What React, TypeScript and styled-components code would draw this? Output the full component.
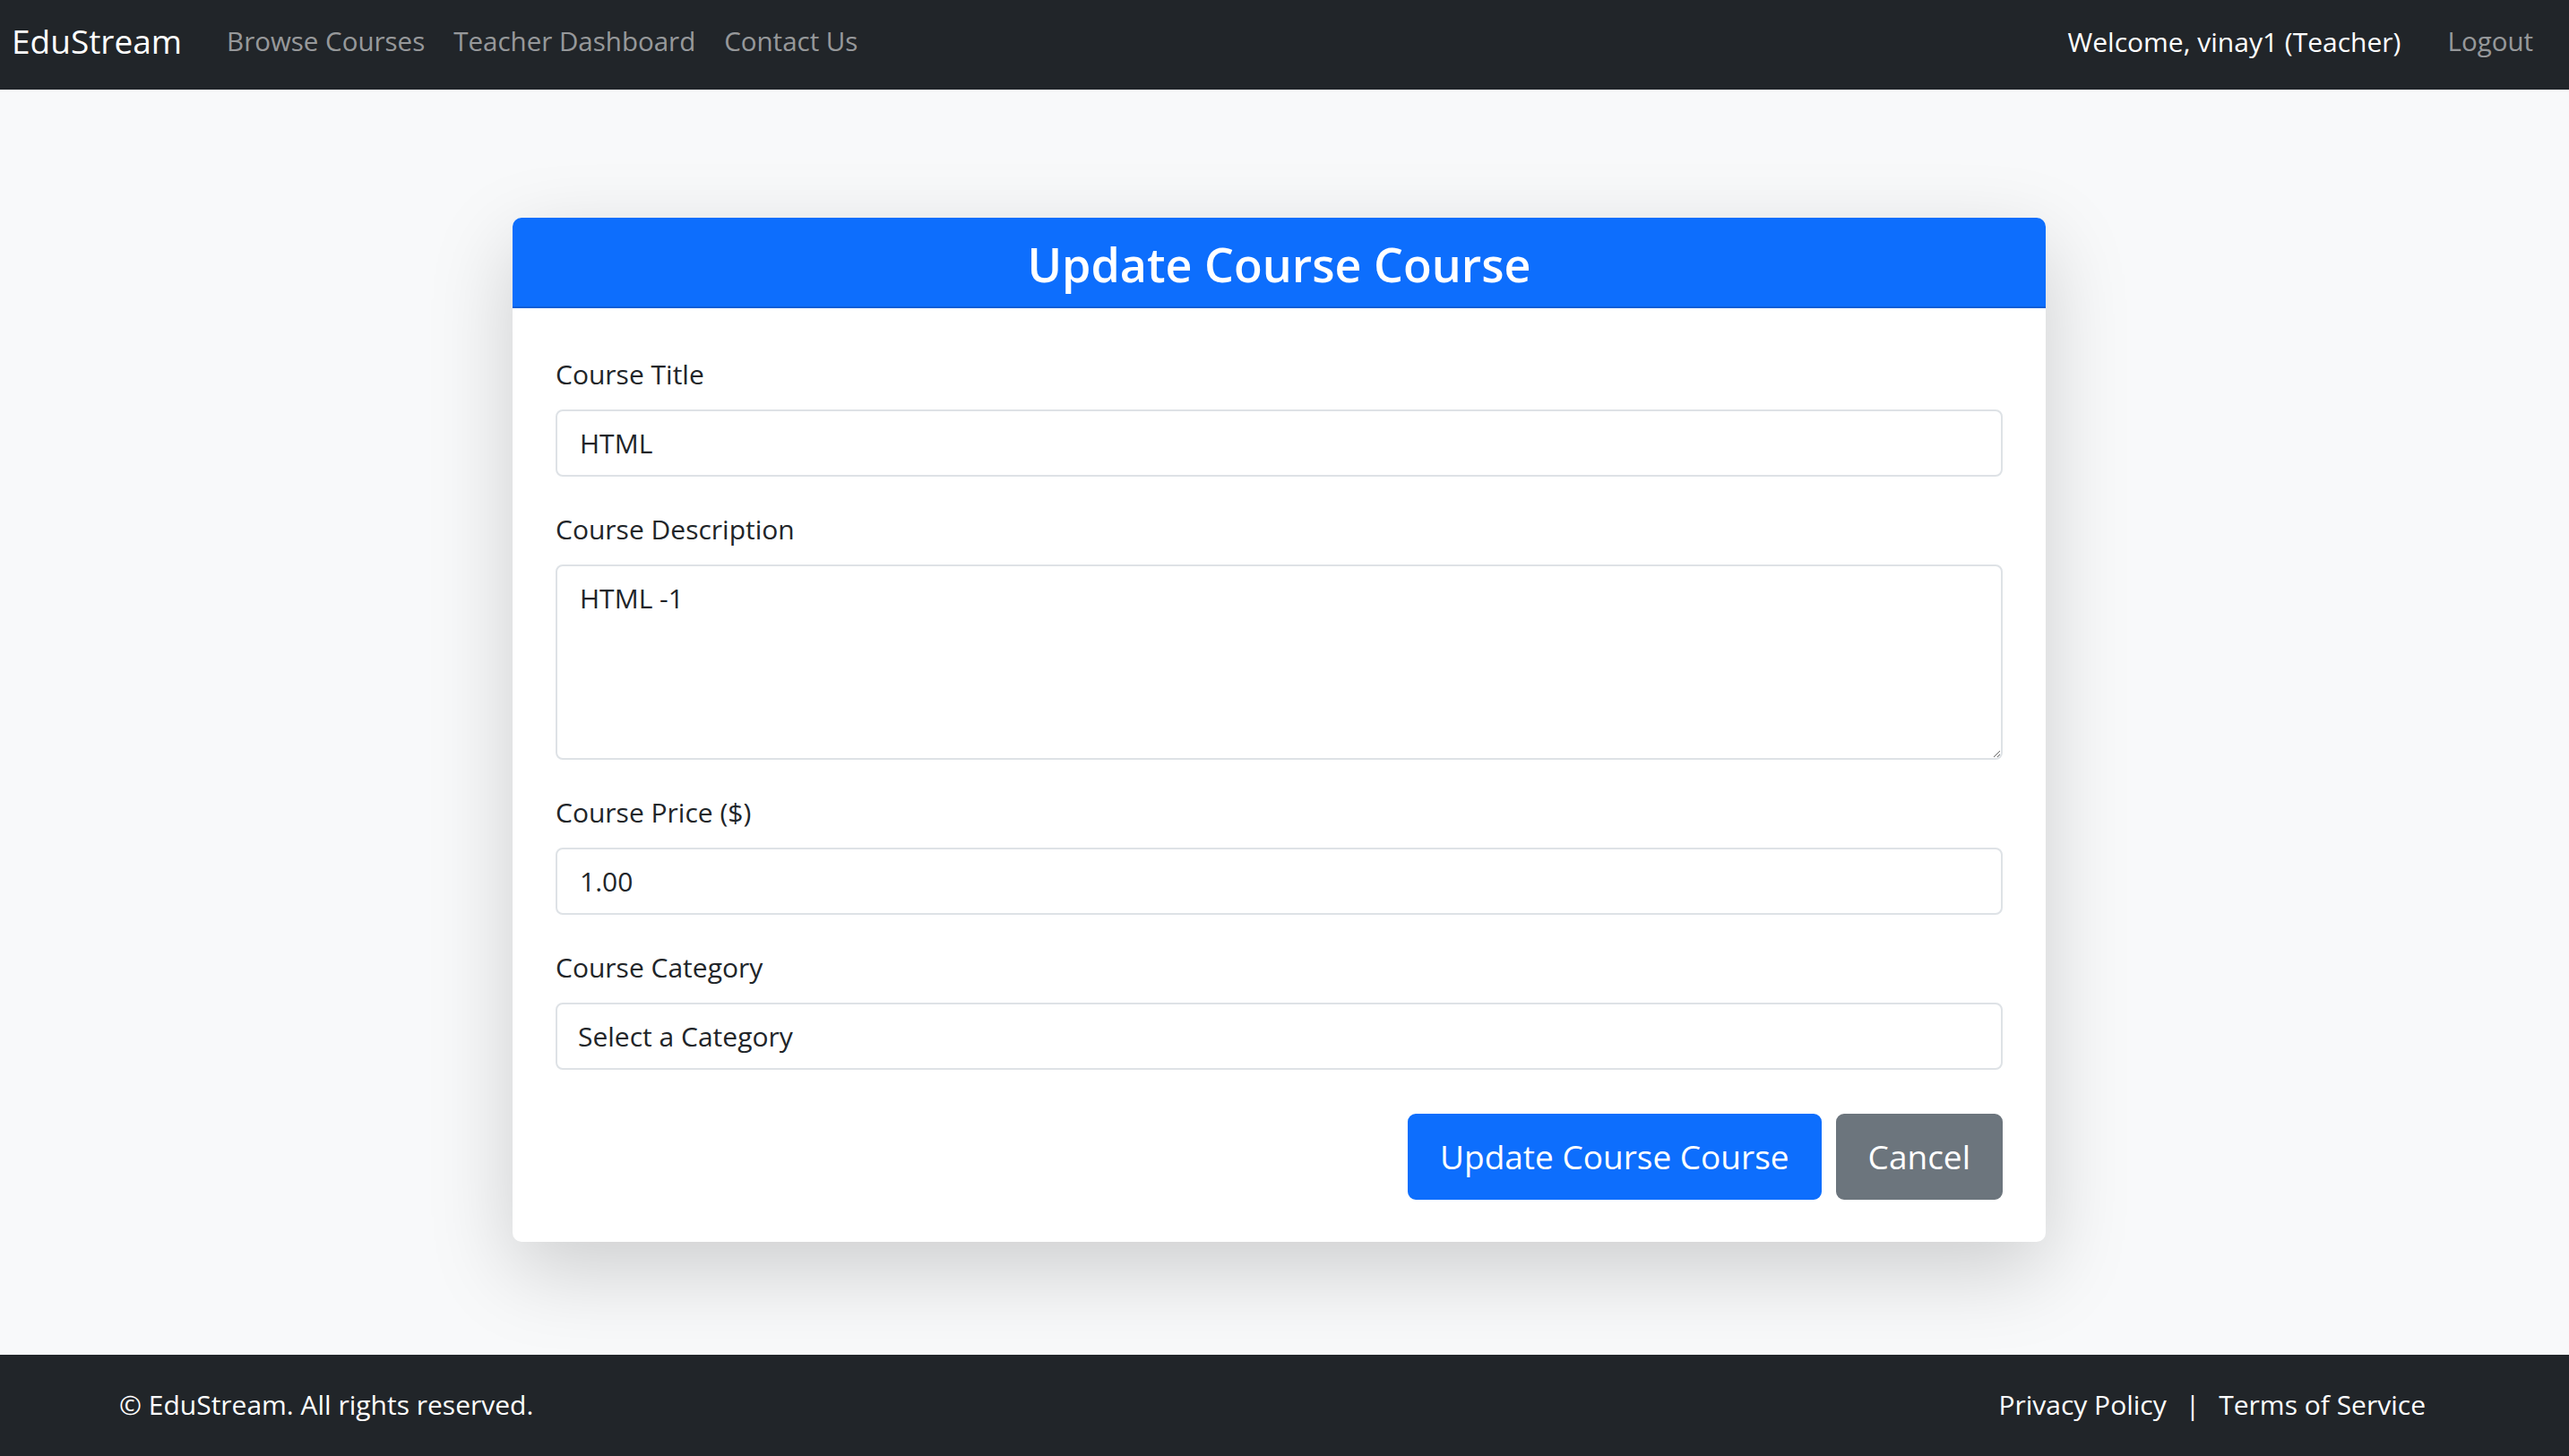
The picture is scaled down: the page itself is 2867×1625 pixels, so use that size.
import React from "react";
import styled, { createGlobalStyle } from "styled-components";

const GlobalStyle = createGlobalStyle`
  html, body {
    margin: 0;
    padding: 0;
    background: #f8f9fa;
    font-family: "Open Sans", "Noto Sans", "Liberation Sans", sans-serif;
    color: #212529;
  }
  * { box-sizing: border-box; }
`;

const Page = styled.div`
  display: flex;
  flex-direction: column;
  min-height: 1625px;
`;

const Navbar = styled.nav`
  height: 100px;
  background: #212529;
  display: flex;
  align-items: center;
  padding: 0 40px 8px 13px;
`;

const Brand = styled.a`
  font-size: 37px;
  color: #fff;
  text-decoration: none;
  margin-right: 34px;
  line-height: 1.5;
`;

const NavList = styled.div`
  display: flex;
  align-items: center;
`;

const NavLink = styled.a<{ $last?: boolean }>`
  font-size: 29.5px;
  line-height: 1.5;
  padding: ${(p) => (p.$last ? "0 0 0 16px" : "0 16px")};
  color: rgba(255, 255, 255, 0.55);
  text-decoration: none;
`;

const NavRight = styled.div`
  margin-left: auto;
  display: flex;
  align-items: center;
`;

const NavText = styled.span`
  font-size: 30px;
  line-height: 1.5;
  color: #fff;
  margin-right: 36px;
`;

const Main = styled.main`
  flex: 1;
  display: flex;
  justify-content: center;
  align-items: flex-start;
  padding: 143px 12px 126px 0;
`;

const Card = styled.div`
  width: 1711px;
  background: #fff;
  border-radius: 10px;
  overflow: hidden;
  box-shadow: 0 31px 94px rgba(0, 0, 0, 0.175);
`;

const CardHeader = styled.div`
  height: 101px;
  background: #0d6efd;
  border-bottom: 2px solid #0b5ed7;
  display: flex;
  align-items: center;
  justify-content: center;
  padding-top: 5px;
`;

const Title = styled.h3`
  margin: 0;
  color: #fff;
  font-size: 52px;
  font-weight: 600;
  line-height: 1.2;
`;

const CardBody = styled.form`
  padding: 50px 48px 47px;
`;

const Field = styled.div<{ $last?: boolean }>`
  margin-bottom: ${(p) => (p.$last ? "49px" : "35px")};
`;

const Label = styled.label`
  display: block;
  font-size: 30px;
  line-height: 47px;
  margin-bottom: 16px;
  color: #212529;
`;

const Input = styled.input`
  display: block;
  width: 100%;
  height: 75px;
  border: 2px solid #dee2e6;
  border-radius: 8px;
  padding: 0 25px;
  font-family: inherit;
  font-size: 30px;
  color: #212529;
  background: #fff;
  outline: none;
`;

const TextArea = styled.textarea`
  display: block;
  width: 100%;
  height: 218px;
  border: 2px solid #dee2e6;
  border-radius: 8px;
  padding: 12px 25px;
  font-family: inherit;
  font-size: 30px;
  line-height: 47px;
  color: #212529;
  background: #fff;
  outline: none;
  resize: vertical;
`;

const Select = styled.select`
  display: block;
  width: 100%;
  height: 75px;
  border: 2px solid #dee2e6;
  border-radius: 8px;
  padding: 0 23px;
  font-family: inherit;
  font-size: 30px;
  color: #212529;
  background: #fff;
  outline: none;
  appearance: none;
  -webkit-appearance: none;
`;

const Actions = styled.div`
  display: flex;
  justify-content: flex-end;
  gap: 16px;
`;

const Button = styled.button<{ $variant: "primary" | "secondary" }>`
  height: 96px;
  padding: 0 34px;
  border: 2px solid ${(p) => (p.$variant === "primary" ? "#0d6efd" : "#6c757d")};
  background: ${(p) => (p.$variant === "primary" ? "#0d6efd" : "#6c757d")};
  color: #fff;
  border-radius: 9px;
  font-family: inherit;
  font-size: 37px;
  line-height: 1.5;
  cursor: pointer;
`;

const Footer = styled.footer`
  height: 113px;
  background: #212529;
  color: #fff;
  display: flex;
  align-items: center;
  justify-content: space-between;
  padding: 0 160px 2px 133px;
`;

const FooterText = styled.p`
  margin: 0;
  font-size: 30px;
`;

const FooterLinks = styled.div`
  display: flex;
  align-items: center;
  font-size: 30px;
`;

const FooterLink = styled.a`
  color: #fff;
  text-decoration: none;
`;

const Separator = styled.span`
  margin: 0 21px;
`;

export default function App() {
  return (
    <>
      <GlobalStyle />
      <Page>
        <Navbar>
          <Brand href="#">EduStream</Brand>
          <NavList>
            <NavLink href="#">Browse Courses</NavLink>
            <NavLink href="#">Teacher Dashboard</NavLink>
            <NavLink href="#">Contact Us</NavLink>
          </NavList>
          <NavRight>
            <NavText>Welcome, vinay1 (Teacher)</NavText>
            <NavLink href="#" $last>Logout</NavLink>
          </NavRight>
        </Navbar>
        <Main>
          <Card>
            <CardHeader>
              <Title>Update Course Course</Title>
            </CardHeader>
            <CardBody onSubmit={(e) => e.preventDefault()}>
              <Field>
                <Label htmlFor="title">Course Title</Label>
                <Input id="title" defaultValue="HTML" />
              </Field>
              <Field>
                <Label htmlFor="desc">Course Description</Label>
                <TextArea id="desc" defaultValue="HTML -1" />
              </Field>
              <Field>
                <Label htmlFor="price">Course Price ($)</Label>
                <Input id="price" defaultValue="1.00" />
              </Field>
              <Field $last>
                <Label htmlFor="cat">Course Category</Label>
                <Select id="cat" defaultValue="">
                  <option value="">Select a Category</option>
                </Select>
              </Field>
              <Actions>
                <Button $variant="primary" type="submit">Update Course Course</Button>
                <Button $variant="secondary" type="button">Cancel</Button>
              </Actions>
            </CardBody>
          </Card>
        </Main>
        <Footer>
          <FooterText>© EduStream. All rights reserved.</FooterText>
          <FooterLinks>
            <FooterLink href="#">Privacy Policy</FooterLink>
            <Separator>|</Separator>
            <FooterLink href="#">Terms of Service</FooterLink>
          </FooterLinks>
        </Footer>
      </Page>
    </>
  );
}
